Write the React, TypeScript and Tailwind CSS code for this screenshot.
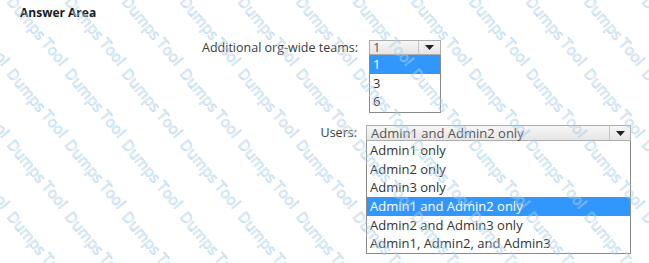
import React from "react";

function Arrow() {
  return (
    <svg width="9" height="5" viewBox="0 0 9 5" className="block">
      <path d="M0 0 H9 L4.5 5 Z" fill="#222" />
    </svg>
  );
}

function Watermark() {
  const items: { x: number; y: number }[] = [];
  for (let j = -2; j < 5; j++) {
    for (let i = -3; i < 12; i++) {
      items.push({ x: 16 + i * 57.7, y: -6 + j * 71.5 });
    }
  }
  return (
    <div className="pointer-events-none absolute inset-0 overflow-hidden">
      {items.map((p, k) => (
        <span
          key={k}
          className="absolute origin-top-left rotate-[50deg] whitespace-nowrap font-['Open_Sans',sans-serif] text-[15px] leading-none text-transparent [-webkit-text-stroke:0.6px_#a8cfe9] opacity-80"
          style={{ left: p.x, top: p.y }}
        >
          Dumps Tool
        </span>
      ))}
    </div>
  );
}

export default function App() {
  const users = [
    "Admin1 only",
    "Admin2 only",
    "Admin3 only",
    "Admin1 and Admin2 only",
    "Admin2 and Admin3 only",
    "Admin1, Admin2, and Admin3",
  ];

  return (
    <div className="relative h-[263px] w-[649px] overflow-hidden bg-white font-['Open_Sans',sans-serif] text-[#333]">
      <div className="px-5 pt-[5px]">
        <h2 className="text-[12px] font-bold leading-4 text-[#1a1a1a]">Answer Area</h2>
      </div>

      {/* teams */}
      <div className="mt-[19px] flex items-start">
        <div className="w-[369px] pr-[11px] text-right text-[12.5px] leading-[15px] text-[#3a3a3a]">
          Additional org-wide teams:
        </div>
        <div className="w-[72px]">
          <div className="flex h-[15px] border border-[#adadad] bg-gradient-to-b from-[#f6f6f6] to-[#e6e6e6] text-[13px] leading-[13px]">
            <span className="flex-1 pl-[3px] text-[#555]">1</span>
            <span className="flex w-[22px] items-center justify-center border-l border-[#c4c4c4]">
              <Arrow />
            </span>
          </div>
          <div className="border-x border-b border-[#8a8a8a] bg-white pb-[2px] text-[13px]">
            <div className="h-[19px] bg-[#3297fd] pl-[3px] leading-[19px] text-white">1</div>
            <div className="h-[18px] pl-[3px] leading-[18px]">3</div>
            <div className="h-[18px] pl-[3px] leading-[18px]">6</div>
          </div>
        </div>
      </div>

      {/* users */}
      <div className="mt-[12px] flex items-start">
        <div className="w-[366px] pr-[9px] text-right text-[12.5px] leading-[16px] text-[#3a3a3a]">
          Users:
        </div>
        <div className="w-[265px]">
          <div className="flex h-[16px] border border-[#adadad] bg-gradient-to-b from-[#f6f6f6] to-[#e6e6e6] text-[13px] leading-[14px]">
            <span className="flex-1 pl-[4px] text-[#555]">Admin1 and Admin2 only</span>
            <span className="flex w-[21px] items-center justify-center border-l border-[#c4c4c4]">
              <Arrow />
            </span>
          </div>
          <div className="border-x border-b border-[#8a8a8a] bg-white text-[13px]">
            {users.map((u) => (
              <div
                key={u}
                className={
                  u === "Admin1 and Admin2 only"
                    ? "h-[18.7px] bg-[#3297fd] pl-[3px] leading-[18.7px] text-white"
                    : "h-[18.7px] pl-[3px] leading-[18.7px]"
                }
              >
                {u}
              </div>
            ))}
          </div>
        </div>
      </div>

      <Watermark />
    </div>
  );
}
